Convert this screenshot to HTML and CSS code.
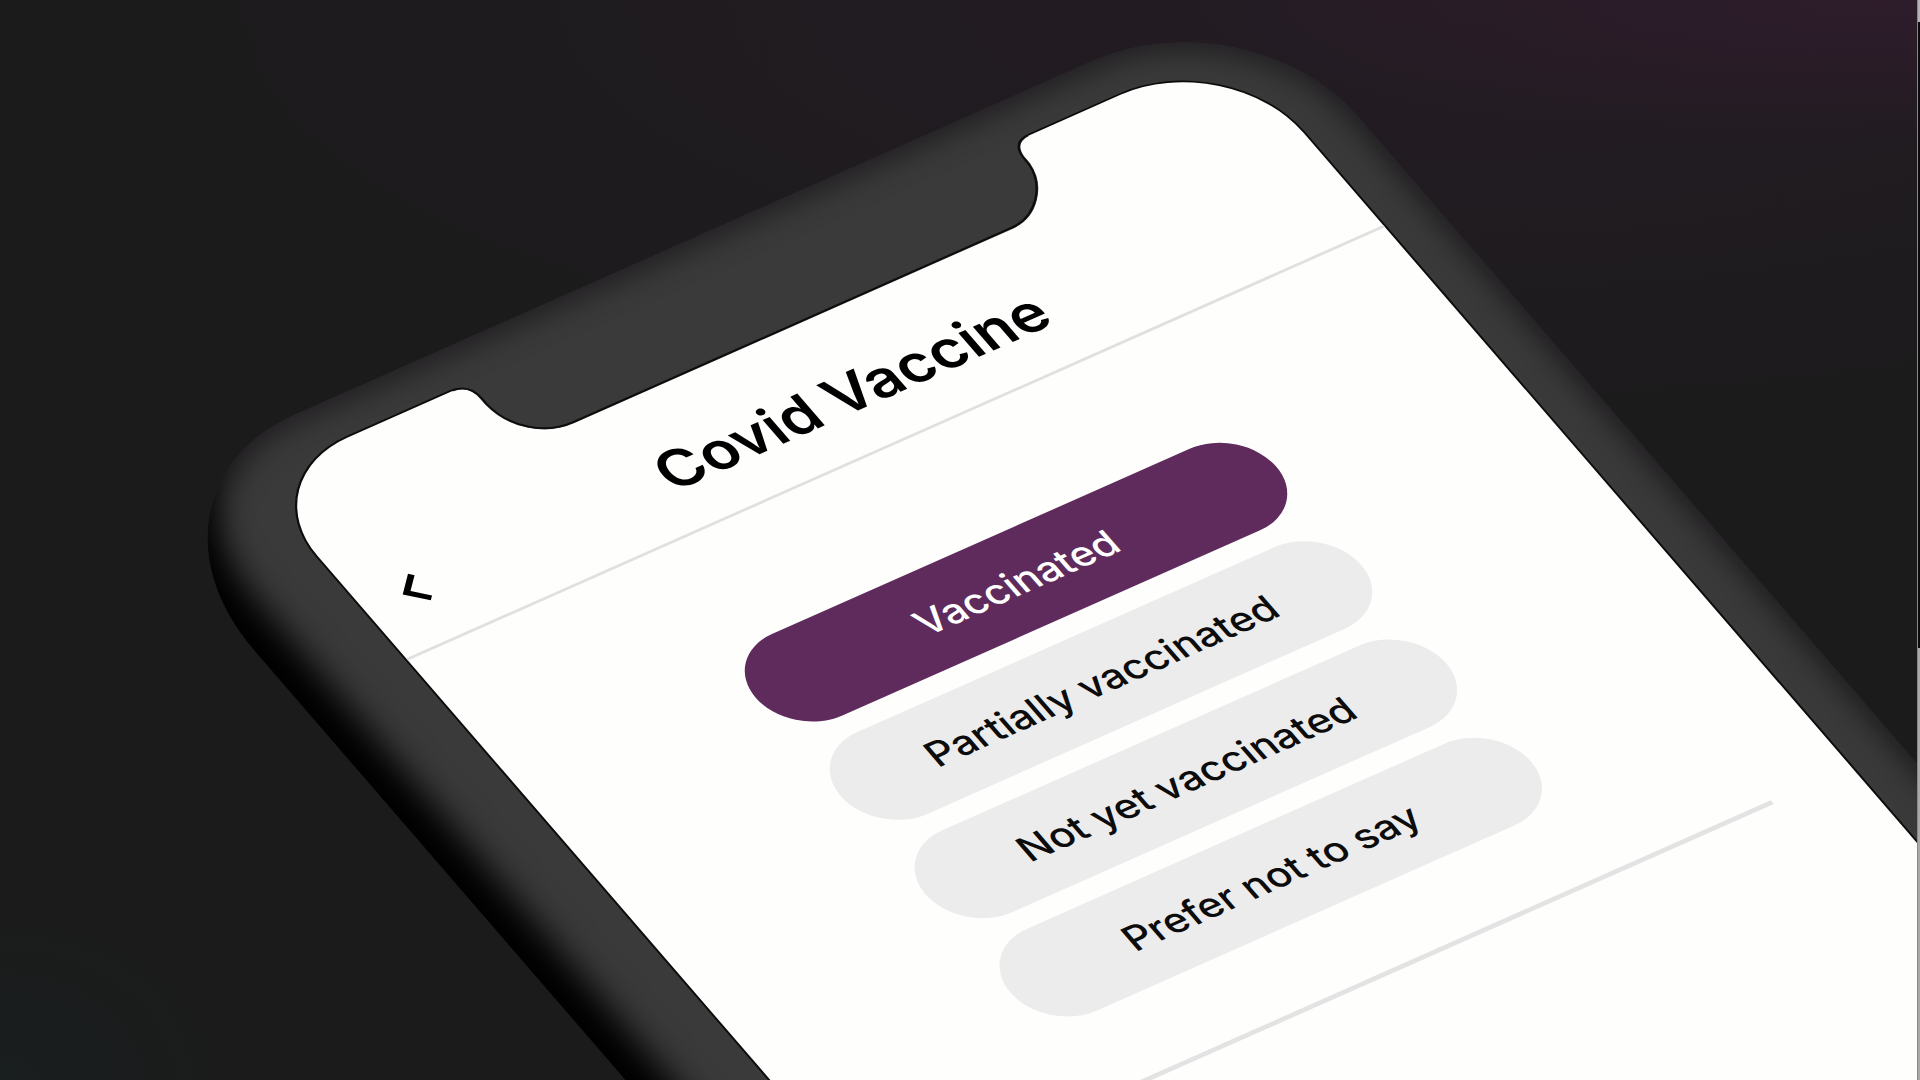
FILE: index.html
```
<!DOCTYPE html>
<html lang="en">
<head>
	<meta charset="utf-8">
	<title>Covid Vaccine</title>
	<link rel="stylesheet" href="styles.css">
</head>
<body>
	<main class="scene">
		<div class="phone">
			<div class="phone-body"></div>
			<div class="screen">
				<svg class="notch" viewBox="0 0 1062 90" aria-hidden="true">
					<path class="notch-fill" d="M218 -1Q236 0 236 20V28C238 62 262 84 292 84H768C796 84 822 56 825 28V20Q826 0 844 -1Z"/>
					<path class="notch-line" d="M218 -1Q236 0 236 20V28C238 62 262 84 292 84H768C796 84 822 56 825 28V20Q826 0 844 -1"/>
				</svg>
				<header class="screen-header">
					<button class="back-button" aria-label="Back">
						<svg width="24" height="40" viewBox="0 0 24 40" aria-hidden="true">
							<path d="M21 4L5 20L21 36"/>
						</svg>
					</button>
					<h1 class="title">Covid Vaccine</h1>
				</header>
				<div class="options">
					<button class="option option-selected">Vaccinated</button>
					<button class="option">Partially vaccinated</button>
					<button class="option">Not yet vaccinated</button>
					<button class="option">Prefer not to say</button>
				</div>
				<hr class="divider">
			</div>
		</div>
		<div class="scroll-edge"><div class="scroll-top"></div><div class="scroll-thumb"></div></div>
	</main>
</body>
</html>
```
FILE: styles.css
```
* {
	box-sizing: border-box;
}
body {
	margin: 0;
	font-family: Inter, "Liberation Sans", sans-serif;
}
.scene {
	position: relative;
	height: 100vh;
	overflow: hidden;
	background:
		radial-gradient(ellipse 36% 14% at 98% 0%, #2e1c2b, transparent),
		radial-gradient(ellipse 75% 44% at 75% 0%, #241c24, transparent),
		radial-gradient(ellipse 12% 16% at 0% 100%, #191e1f, transparent),
		#1b1b1b;
}

/* the phone lies on the surface, turned away from the viewer */
.phone {
	position: absolute;
	top: 480px;
	left: 252px;
	width: 1062px;
	height: 1600px;
	transform: matrix(0.92, -0.408, 0.629, 0.728, 0, 0);
	transform-origin: 0 0;
}
.phone-body {
	position: absolute;
	inset: -46px -54px 0 -114px;
	border-radius: 190px 170px 0 0 / 216px 170px 0 0;
	background-color: #3a3a3a;
	box-shadow: inset 36px -52px 36px #000, inset 0 0 30px 7px #1e1b1e;
}
.screen {
	position: relative;
	height: 100%;
	border-radius: 104px 118px 0 0;
	background-color: #fefefd;
	box-shadow: 0 0 0 2px #0c0c0c;
}
.notch {
	position: absolute;
	top: 0;
	left: 0;
	width: 100%;
	height: 90px;
	overflow: visible;
}
.notch-fill {
	fill: #3a3a3a;
	stroke: #3a3a3a;
	stroke-width: 3;
}
.notch-line {
	fill: none;
	stroke: #0c0c0c;
	stroke-width: 2;
}
.screen-header {
	display: grid;
	grid-template-columns: 1fr auto 1fr;
	align-items: center;
	height: 248px;
	padding: 106px 40px 0;
	border-bottom: 3px solid #e0e0e1;
}
.back-button {
	justify-self: start;
	padding: 8px 0 0;
	border: none;
	background: none;
	cursor: pointer;
}
.back-button svg {
	display: block;
	fill: none;
	stroke: #000;
	stroke-width: 6;
}
.title {
	margin: 0;
	color: #000;
	font-size: 60px;
	font-weight: 600;
	line-height: 72px;
}
.options {
	display: flex;
	flex-direction: column;
	align-items: center;
	gap: 23px;
	padding-top: 134px;
}
.option {
	width: 566px;
	height: 112px;
	border: none;
	border-radius: 56px;
	background-color: #ececec;
	color: #0c0c0c;
	font-family: inherit;
	font-size: 40px;
	font-weight: 500;
	cursor: pointer;
}
.option-selected {
	background-color: #5e2b5c;
	color: #fff;
}
.divider {
	width: 890px;
	height: 5px;
	margin: 88px auto 0;
	border: none;
	background-color: #e3e3e3;
}

/* sliver of a scrollbar at the window's edge */
.scroll-edge {
	position: absolute;
	top: 0;
	right: 0;
	display: flex;
	flex-direction: column;
	justify-content: space-between;
	width: 3px;
	height: 100%;
	border-left: 1px solid #8a868a;
	background-color: #0b0b0b;
}
.scroll-top {
	height: 22px;
	background-color: #b5b3b3;
}
.scroll-thumb {
	height: 40%;
	background-color: #a9a9a9;
}
```
